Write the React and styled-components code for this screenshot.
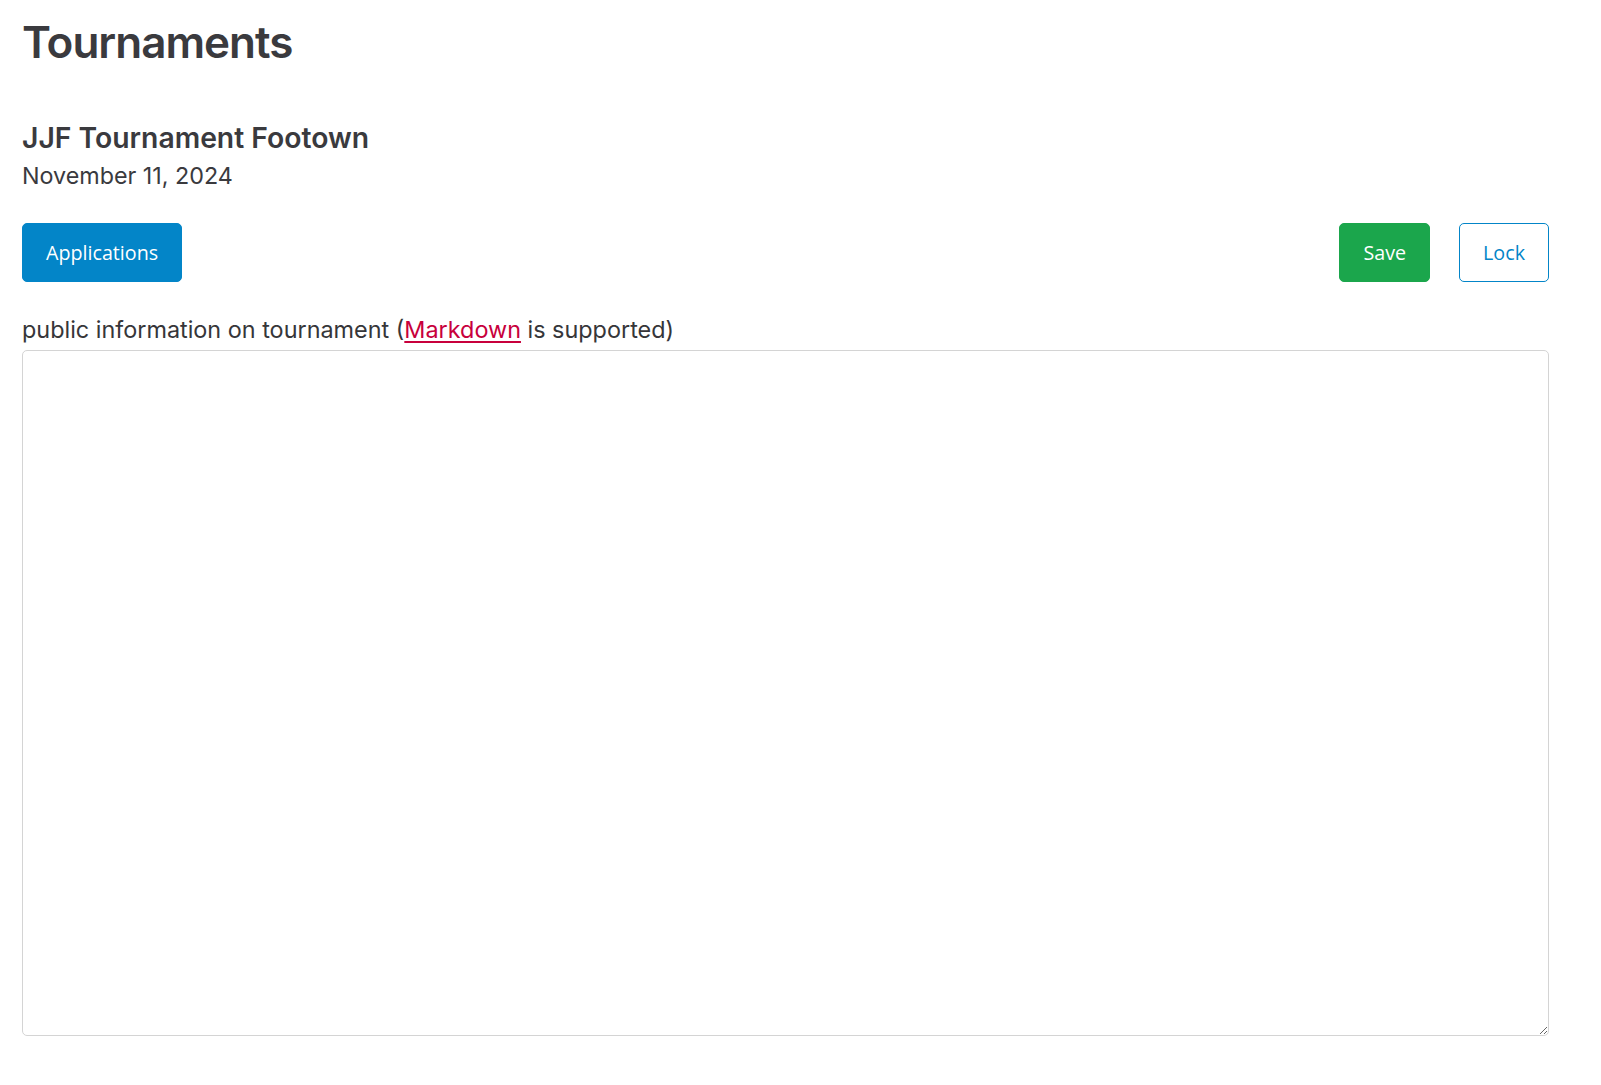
import styled, { createGlobalStyle } from 'styled-components';

const GlobalStyle = createGlobalStyle`
  html, body {
    margin: 0;
    padding: 0;
    background: #fff;
  }
  body {
    font-family: Inter, "Noto Sans", sans-serif;
    color: #363639;
  }
`;

const Page = styled.main`
  padding: 14px 52px 0 22px;
  display: flex;
  flex-direction: column;
`;

const Title = styled.h1`
  margin: 0;
  font-size: 44px;
  font-weight: 600;
  letter-spacing: -1px;
  line-height: 56px;
  color: #3a3a3e;
`;

const TournamentName = styled.h2`
  margin: 50px 0 0;
  font-size: 28.3px;
  font-weight: 600;
  line-height: 36px;
  color: #3a3a3e;
`;

const TournamentDate = styled.div`
  margin-top: 4px;
  font-size: 23.3px;
  line-height: 32px;
  color: #3a3a3e;
`;

const Toolbar = styled.div`
  display: flex;
  align-items: center;
  gap: 29px;
  margin-top: 31px;
`;

const Spacer = styled.div`
  flex: 1;
`;

const Button = styled.button`
  height: 59px;
  padding: 0 23px;
  border-radius: 5px;
  font-family: "Open Sans", "Noto Sans", sans-serif;
  font-size: 19.7px;
  cursor: pointer;
  border: 1px solid ${p => p.$color};
  background: ${p => (p.$outline ? '#fff' : p.$color)};
  color: ${p => (p.$outline ? p.$color : '#fff')};
`;

const Label = styled.label`
  margin-top: 34px;
  font-size: 23.4px;
  line-height: 28px;
  color: #363639;

  a {
    color: #c8003c;
    text-decoration: underline;
    text-underline-offset: 3px;
  }
`;

const Editor = styled.textarea`
  margin-top: 6px;
  height: 686px;
  box-sizing: border-box;
  border: 1px solid #d4d4d4;
  border-radius: 5px;
  padding: 12px;
  font-family: Inter, "Noto Sans", sans-serif;
  font-size: 18px;
  resize: vertical;
  outline: none;
`;

export default function App() {
  return (
    <>
      <GlobalStyle />
      <Page>
        <Title>Tournaments</Title>
        <TournamentName>JJF Tournament Footown</TournamentName>
        <TournamentDate>November 11, 2024</TournamentDate>
        <Toolbar>
          <Button $color="#0385c8">Applications</Button>
          <Spacer />
          <Button $color="#1ba64c">Save</Button>
          <Button $color="#0385c8" $outline>Lock</Button>
        </Toolbar>
        <Label htmlFor="info">
          public information on tournament (<a href="#markdown">Markdown</a> is supported)
        </Label>
        <Editor id="info" />
      </Page>
    </>
  );
}
